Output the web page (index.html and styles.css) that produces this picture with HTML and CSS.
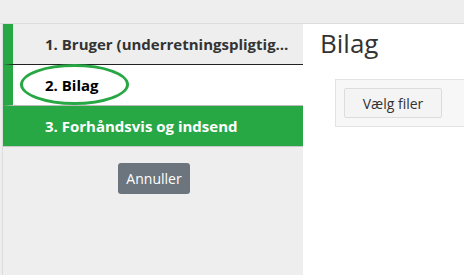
FILE: index.html
```html
<!DOCTYPE html>
<html lang="da">
<head>
<meta charset="utf-8">
<link rel="stylesheet" href="styles.css">
</head>
<body>
<div class="topbar"></div>
<div class="layout">
  <nav class="sidebar">
    <div class="step step-done">
      <span class="step-label">1. Bruger (underretningspligtige virksomhed)</span>
    </div>
    <div class="step step-current">
      <span class="step-label">2. Bilag</span>
      <span class="circle"></span>
    </div>
    <div class="step step-next">
      <span class="step-label">3. Forhåndsvis og indsend</span>
    </div>
    <div class="actions">
      <button class="btn-cancel">Annuller</button>
    </div>
  </nav>
  <main class="main">
    <h1 class="title">Bilag</h1>
    <div class="upload-card">
      <button class="btn-file">Vælg filer</button>
    </div>
  </main>
</div>
</body>
</html>
```
FILE: styles.css
```css
html, body {
  margin: 0;
  padding: 0;
  height: 100%;
  overflow: hidden;
  font-family: "Open Sans", "Noto Sans", sans-serif;
  background: #fff;
}
.topbar {
  height: 23px;
  background: #eeeeee;
  border-bottom: 1px solid #dcdcdc;
}
.layout {
  display: flex;
  height: 251px;
}
.sidebar {
  width: 300px;
  margin-left: 2px;
  border-left: 1px solid #dcdcdc;
  background: #eeeeee;
  display: flex;
  flex-direction: column;
  flex-shrink: 0;
  box-shadow: -2px 0 0 #eeeeee;
}
.step {
  position: relative;
  display: flex;
  align-items: center;
  height: 40px;
  padding-left: 32px;
  padding-right: 8px;
  font-weight: 700;
  font-size: 15px;
}
.step-label {
  white-space: nowrap;
  overflow: hidden;
  text-overflow: ellipsis;
}
.step-done {
  border-left: 10px solid #28a745;
  background: #eeeeee;
  color: #333333;
  border-bottom: 1px solid #222222;
}
.step-current {
  border-left: 10px solid #28a745;
  background: #ffffff;
  color: #000000;
  border-bottom: 1px solid #bbbbbb;
}
.step-next {
  background: #28a745;
  color: #ffffff;
  padding-left: 42px;
  border-bottom: 1px solid #c8c8c8;
}
.circle {
  position: absolute;
  left: 7px;
  top: -1px;
  width: 103px;
  height: 35px;
  border: 3px solid #28a745;
  border-radius: 50%;
  pointer-events: none;
}
.actions {
  display: flex;
  justify-content: center;
  padding-top: 16px;
}
.btn-cancel {
  font-family: inherit;
  font-size: 14px;
  color: #ffffff;
  background: #6c757d;
  border: none;
  border-radius: 3px;
  padding: 0 8px;
  height: 31px;
  margin-left: 2px;
}
.main {
  flex: 1;
  padding-left: 17px;
  min-width: 0;
}
.title {
  margin: 0;
  padding-top: 1px;
  font-size: 26px;
  font-weight: 400;
  color: #333333;
  line-height: 36px;
}
.upload-card {
  margin-top: 18px;
  margin-left: 15px;
  margin-right: -20px;
  background: #f7f7f7;
  border: 1px solid #e3e3e3;
  padding: 8px;
  box-sizing: border-box;
  height: 48px;
}
.btn-file {
  font-family: inherit;
  font-size: 14px;
  color: #333333;
  background: #f4f4f4;
  border: 1px solid #dcdcdc;
  border-radius: 2px;
  width: 98px;
  height: 30px;
  padding: 0;
}
```
